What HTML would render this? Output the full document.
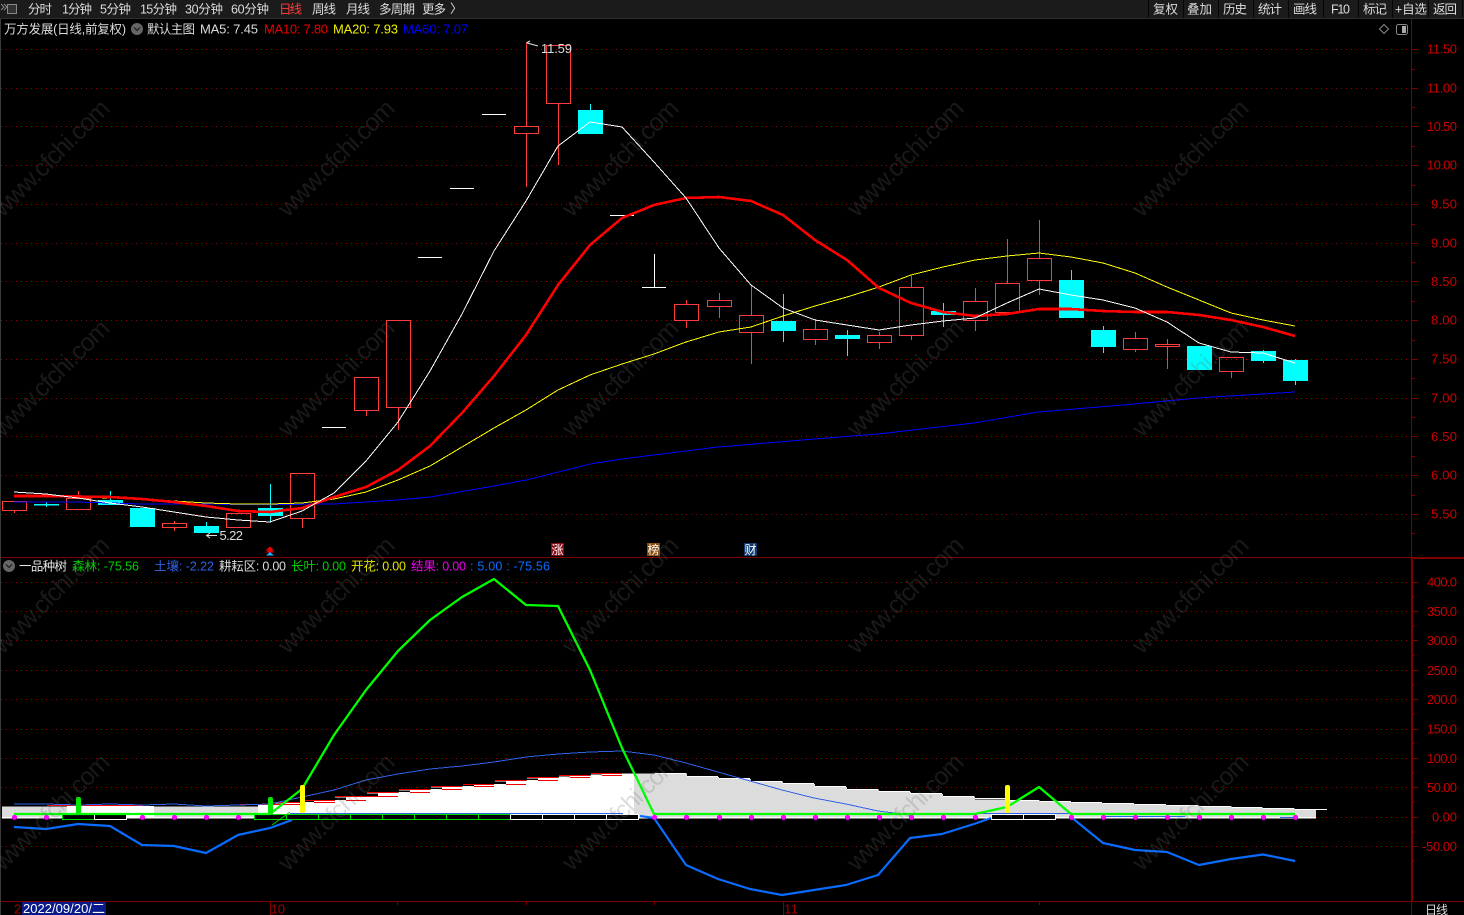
<!DOCTYPE html>
<html><head><meta charset="utf-8"><title>万方发展</title>
<style>
html,body{margin:0;padding:0;background:#000;width:1464px;height:915px;overflow:hidden}
svg{display:block;font-family:"Liberation Sans","Noto Sans CJK SC",sans-serif}
.c{shape-rendering:crispEdges}
.l{fill:none;shape-rendering:crispEdges;stroke-linejoin:round}
.ax text{fill:#cc0000;font-size:13px;text-anchor:end}
.wm text{fill:rgba(110,110,110,.23);font-size:25px}
.t{fill:#dcdcdc;font-size:12.5px}
</style></head><body>
<svg width="1464" height="915" viewBox="0 0 1464 915" xmlns="http://www.w3.org/2000/svg">
<rect width="1464" height="915" fill="#000"/>
<!-- top bar -->
<rect width="1464" height="18" fill="#1b1b1b"/>
<rect y="18" width="1464" height="1" fill="#2e2e2e"/>
<rect x="0" y="19" width="1" height="896" fill="#3a3a3a"/>
<g class="c" fill="#060606"><rect x="1148" width="1" height="18"/><rect x="1183" width="1" height="18"/><rect x="1218" width="1" height="18"/><rect x="1253" width="1" height="18"/><rect x="1288" width="1" height="18"/><rect x="1323" width="1" height="18"/><rect x="1358" width="1" height="18"/><rect x="1392" width="1" height="18"/><rect x="1428" width="1" height="18"/><rect x="1462" width="1" height="18"/></g>
<path d="M1 4l3 3-3 3M4 4l3 3-3 3" fill="none" stroke="#8a8a8a"/>
<rect x="7.5" y="4.5" width="9" height="9" fill="#333" stroke="#888"/>
<g class="t">
<text x="28" y="13.5" textLength="24">分时</text>
<text x="62" y="13.5" textLength="30">1分钟</text>
<text x="100" y="13.5" textLength="31">5分钟</text>
<text x="140" y="13.5" textLength="37">15分钟</text>
<text x="185" y="13.5" textLength="38">30分钟</text>
<text x="231" y="13.5" textLength="38">60分钟</text>
<text x="279" y="13.5" textLength="23" style="fill:#ff3c3c">日线</text>
<text x="312" y="13.5" textLength="24">周线</text>
<text x="346" y="13.5" textLength="24">月线</text>
<text x="379" y="13.5" textLength="36">多周期</text>
<text x="422" y="13.5" textLength="24">更多</text>
<text x="450" y="13">〉</text>
<text x="1153" y="13.5" textLength="25">复权</text>
<text x="1187" y="13.5" textLength="25">叠加</text>
<text x="1223" y="13.5" textLength="24">历史</text>
<text x="1258" y="13.5" textLength="24">统计</text>
<text x="1293" y="13.5" textLength="24">画线</text>
<text x="1331" y="13.5" textLength="19">F10</text>
<text x="1363" y="13.5" textLength="24">标记</text>
<text x="1395" y="13.5" textLength="32">+自选</text>
<text x="1433" y="13.5" textLength="24">返回</text>
<text x="4" y="33.5" textLength="122">万方发展(日线,前复权)</text>
<text x="147" y="33.5" textLength="48">默认主图</text>
<text x="200" y="33.5" textLength="58" style="font-size:13px">MA5: 7.45</text>
<text x="264" y="33.5" textLength="64" style="fill:#e80000;font-size:13px">MA10: 7.80</text>
<text x="333" y="33.5" textLength="65" style="fill:#f0f000;font-size:13px">MA20: 7.93</text>
<text x="403" y="33.5" textLength="65" style="fill:#0000ff;font-size:13px">MA60: 7.07</text>
</g>
<circle cx="137" cy="29" r="6" fill="#666"/><path d="M134 27.5l3 3 3-3" fill="none" stroke="#222" stroke-width="1.3"/>
<path d="M1384 24.5l4.5 4.5-4.5 4.5-4.5-4.5z" fill="none" stroke="#888"/>
<rect x="1396.5" y="24.5" width="11" height="10" rx="2" fill="none" stroke="#888"/><rect x="1402" y="26" width="4" height="7" fill="#aaa"/>

<!-- grid -->
<path d="M1 49.5H1412M1 88.5H1412M1 126.5H1412M1 165.5H1412M1 204.5H1412M1 243.5H1412M1 281.5H1412M1 320.5H1412M1 359.5H1412M1 398.5H1412M1 436.5H1412M1 475.5H1412M1 514.5H1412M1 582.5H1412M1 611.5H1412M1 640.5H1412M1 670.5H1412M1 699.5H1412M1 729.5H1412M1 758.5H1412M1 787.5H1412M1 817.5H1412M1 846.5H1412" stroke="#9a0000" stroke-dasharray="1 4" fill="none" class="c"/>

<!-- axes -->
<g class="c" fill="#800000">
<rect x="1" y="557" width="1463" height="1"/>
<rect x="1" y="901" width="1463" height="1"/>
<rect x="1411" y="19" width="1" height="539"/>
<rect x="1411" y="558" width="2" height="343"/>
<rect x="1412" y="557" width="52" height="2"/>
<rect x="1411" y="901" width="1" height="14"/>
<rect x="270" y="901" width="1" height="14"/>
<rect x="783" y="901" width="1" height="14"/>
<rect x="397" y="902" width="1" height="3"/><rect x="526" y="902" width="1" height="3"/><rect x="654" y="902" width="1" height="3"/><rect x="1039" y="902" width="1" height="3"/>
</g>
<path class="c" stroke="#800000" fill="none" d="M1412 49.5h6M1412 88.5h6M1412 126.5h6M1412 165.5h6M1412 204.5h6M1412 243.5h6M1412 281.5h6M1412 320.5h6M1412 359.5h6M1412 398.5h6M1412 436.5h6M1412 475.5h6M1412 514.5h6M1412 69.5h3M1412 107.5h3M1412 146.5h3M1412 185.5h3M1412 224.5h3M1412 262.5h3M1412 301.5h3M1412 340.5h3M1412 378.5h3M1412 417.5h3M1412 456.5h3M1412 495.5h3M1412 533.5h3M1412 582.5h6M1412 611.5h6M1412 640.5h6M1412 670.5h6M1412 699.5h6M1412 729.5h6M1412 758.5h6M1412 787.5h6M1412 817.5h6M1412 846.5h6M1412 597h3M1412 626h3M1412 655h3M1412 685h3M1412 714h3M1412 743h3M1412 773h3M1412 802h3M1412 832h3M1412 861h3"/>
<g class="ax">
<text x="1457" y="53.5" textLength="30">11.50</text><text x="1457" y="92.5" textLength="30">11.00</text><text x="1457" y="131" textLength="30">10.50</text><text x="1457" y="169.5" textLength="30">10.00</text>
<text x="1457" y="208.5" textLength="26">9.50</text><text x="1457" y="247.5" textLength="26">9.00</text><text x="1457" y="286" textLength="26">8.50</text><text x="1457" y="324.5" textLength="26">8.00</text><text x="1457" y="363.5" textLength="26">7.50</text><text x="1457" y="402.5" textLength="26">7.00</text><text x="1457" y="441" textLength="26">6.50</text><text x="1457" y="479.5" textLength="26">6.00</text><text x="1457" y="518.5" textLength="26">5.50</text>
<text x="1457" y="586.5" textLength="30">400.0</text><text x="1457" y="616" textLength="30">350.0</text><text x="1457" y="645" textLength="30">300.0</text><text x="1457" y="675" textLength="30">250.0</text><text x="1457" y="704" textLength="30">200.0</text><text x="1457" y="733.5" textLength="30">150.0</text><text x="1457" y="763" textLength="30">100.0</text><text x="1457" y="792" textLength="30">50.00</text><text x="1457" y="821.5" textLength="25">0.00</text><text x="1457" y="851" textLength="35">-50.00</text>
</g>

<!-- white limit lines -->
<path class="c" stroke="#fff" fill="none" d="M322 427.5h24M418 257.5h24M450 188.5h24M482 114.5h24M610 215.5h24M642 287.5h24M654.5 254V287"/>
<!-- red candles -->
<path class="c" stroke="#ff3c3c" fill="none" d="M2.5 501.5h24v9h-24zM14.5 510.5V513M66.5 498.5h24v11h-24zM78.5 491V498.5M162.5 523.5h24v4h-24zM174.5 521V523.5M174.5 527.5V531M226.5 513.5h24v14h-24zM290.5 473.5h24v45h-24zM302.5 518.5V528M354.5 377.5h24v33h-24zM366.5 410.5V416M386.5 320.5h24v87h-24zM398.5 407.5V430M514.5 126.5h24v7h-24zM526.5 43V126.5M526.5 133.5V187M546.5 45.5h24v58h-24zM558.5 103.5V165M674.5 304.5h24v16h-24zM686.5 300V304.5M686.5 320.5V328M707.5 300.5h24v6h-24zM719.5 293V300.5M719.5 306.5V318M739.5 315.5h24v17h-24zM751.5 286V315.5M751.5 332.5V364M803.5 329.5h24v10h-24zM815.5 319V329.5M815.5 339.5V345M867.5 335.5h24v7h-24zM879.5 332V335.5M879.5 342.5V349M899.5 287.5h24v48h-24zM911.5 276V287.5M911.5 335.5V340M963.5 301.5h24v19h-24zM975.5 288V301.5M975.5 320.5V331M995.5 283.5h24v29h-24zM1007.5 239V283.5M1027.5 258.5h24v22h-24zM1039.5 220V258.5M1039.5 280.5V295M1123.5 338.5h24v11h-24zM1135.5 332V338.5M1135.5 349.5V352M1155.5 344.5h24v2h-24zM1167.5 339V344.5M1167.5 346.5V369M1219.5 357.5h24v14h-24zM1231.5 371.5V378"/>
<!-- cyan candles -->
<path class="c" stroke="#00ffff" fill="none" d="M46.5 502V507M110.5 491V500M206.5 522V526M270.5 484V522M590.5 104V110M783.5 294V342M847.5 330V356M943.5 303V327M1071.5 270V280M1103.5 326V353M1263.5 350V363M1295.5 359V385"/>
<path class="c" fill="#00ffff" d="M34 504h25v1.5h-25zM98 500h25v5h-25zM130 508h25v19h-25zM194 526h25v7h-25zM258 508h25v8h-25zM578 110h25v24h-25zM771 321h25v10h-25zM835 335h25v4h-25zM931 311h25v4h-25zM1059 280h25v38h-25zM1091 330h25v17h-25zM1187 346h25v24h-25zM1251 351h25v10h-25zM1283 360h25v21h-25z"/>

<!-- MAs -->
<polyline class="l" stroke="#0000ff" stroke-width="1" points="14,502 78,502 110,503 142,504 174,504 270,504.5 334,504 398,500 430,497 494,486 526,480 590,464 622,459 718,447 814,439 878,434 974,423 1038,412 1134,404 1198,398 1295,392"/>
<polyline class="l" stroke="#ffff00" points="14,495 46,497 78,497 110,498 142,499 174,501 206,503 238,504 270,504 302,503 334,499 366,492 398,480 430,466 462,447 494,428 526,410 558,390 590,375 622,364 654,354 686,342 719,332 751,327 783,316 815,306 847,297 879,287 911,275 943,267 975,260 1007,256 1039,253 1071,257 1103,263 1135,273 1167,287 1199,300 1231,313 1263,320 1295,326"/>
<polyline class="l" stroke="#ff0000" stroke-width="2.6" points="14,496 46,496 78,496.5 110,497 142,499 174,502 206,506 238,511 270,512 302,508 334,497 366,487 398,470 430,446 462,413 494,376 526,335 558,285 590,245 622,218 654,205 686,198 719,197 751,201 783,215 815,240 847,260 879,288 911,303 943,312 975,316 1007,314 1039,309 1071,309 1103,311 1135,312 1167,312 1199,315 1231,320 1263,327 1295,336"/>
<polyline class="l" stroke="#ffffff" points="14,492 46,494 78,498 110,503 142,507 174,512 206,517 238,520 270,522 302,511 334,493 366,461 398,422 430,371 462,314 494,251 526,201 558,146 590,122 622,127 654,162 686,198 719,248 751,285 783,308 815,320 847,325 879,330 911,325 943,321 975,318 1007,303 1039,289 1071,295 1103,300 1135,308 1167,322 1199,343 1231,352 1263,353 1295,363"/>

<!-- labels in chart -->
<path d="M530 44l-3-1.5 3-1.5M527 43l11 3" fill="none" stroke="#ddd"/>
<text x="541" y="53" font-size="13" fill="#dcdcdc" textLength="31">11.59</text>
<path d="M210 533l-3.5 2.5 3.5 2.5M207 535.5h10" fill="none" stroke="#ddd"/>
<text x="219.500" y="540" font-size="13" fill="#dcdcdc" textLength="23.500">5.22</text>
<path d="M270 546.500l4.500 4h-9zM270 549.500l4.500 3h-9z" fill="#f00000"/><path d="M270 552l4 3.500h-8z" fill="#20b0ff"/>
<g class="c"><rect x="551" y="543" width="13" height="13" fill="#8b0a14"/><rect x="647" y="543" width="13" height="13" fill="#8a4a0a"/><rect x="744" y="543" width="13" height="13" fill="#0e3a70"/></g>
<g font-size="12" fill="#fff" text-anchor="middle"><text x="557.500" y="554">涨</text><text x="653.500" y="554">榜</text><text x="750.500" y="554">财</text></g>

<!-- indicator title -->
<circle cx="9" cy="566" r="6" fill="#666"/><path d="M6 564.500l3 3 3-3" fill="none" stroke="#222" stroke-width="1.300"/>
<g font-size="12.500">
<text x="19" y="570.500" fill="#e6e6e6" textLength="48">一品种树</text>
<text x="72" y="570.500" fill="#00d000" textLength="67">森林: -75.56</text>
<text x="154" y="570.500" fill="#2f62e8" textLength="60">土壤: -2.22</text>
<text x="219" y="570.500" fill="#dcdcdc" textLength="67">耕耘区: 0.00</text>
<text x="291" y="570.500" fill="#00d000" textLength="55">长叶: 0.00</text>
<text x="351" y="570.500" fill="#e8e800" textLength="55">开花: 0.00</text>
<text x="411" y="570.500" fill="#f000f0" textLength="55">结果: 0.00</text>
<text x="470" y="570.500" fill="#0a6cff" textLength="80">: 5.00 : -75.56</text>
</g>

<!-- histogram -->
<g class="c">
<rect x="2" y="806.500" width="65" height="11.200" fill="#dcdcdc"/>
<rect x="67" y="806" width="87" height="11.700" fill="#fff"/>
<rect x="154" y="806.500" width="104" height="11.200" fill="#dcdcdc"/>
<path fill="#fff" d="M258 804.300H271V802.700H303V800H335V796.300H367V792.300H399V789.300H431V786.300H463V784H495V780.300H527V777.300H559V775.300H591V773.700H623V773.300H634V817.700H258Z"/>
<path fill="#000" d="M271 803.700h11v0.600h-11zM303 801h11v1h-11zM335 797.300h11v2.500h-11zM367 793.300h11v2.500h-11zM399 790.300h11v1.600h-11zM431 787.300h11v1.600h-11zM463 785h11v1h-11zM495 781.300h11v2.500h-11zM527 778.300h11v1.600h-11zM559 776.300h11v0.800h-11zM591 774.700h11v0.400h-11z"/>
<path stroke="#f00000" fill="none" d="M47 805.500H143M240 804.500H302M272 802.500H302M305 800.500H335M314 802.500H335M335 796.500H366M346 800.500H366M367 792.500H398M360 796.500H398M399 789.500H430M410 792.500H430M431 786.500H462M442 789.500H462M463 784.500H494M474 786.500H494M495 780.500H526M506 784.500H526M527 777.500H558M538 780.500H558M559 775.500H590M570 777.500H590M591 773.500H622M602 775.500H622"/>
<path fill="#dcdcdc" d="M634 817.700V773.500H687V777H719V779H751V781.500H783V784H815V787H847V789.500H879V792H911V794H943V796.500H975V799.300H1007V800.700H1040V802H1072V803H1103V804H1135V805H1167V805.700H1199V806.700H1232V807.700H1263V808.700H1295V809.700H1316V817.700Z"/>
<path stroke="#fff" fill="none" d="M655 773.500H686M687 776.500H718M719 778.500H750M751 781.500H782M783 783.500H814M815 786.500H846M847 789.500H878M879 791.500H910M911 793.500H942M943 796.500H974M975 798.500H1006M1007 800.500H1039M1040 801.500H1071M1072 802.500H1102M1103 803.500H1134M1135 804.500H1166M1167 805.500H1198M1199 806.500H1231M1232 807.500H1262M1263 808.500H1294M1295 809.500H1327"/>
<rect x="2" y="817" width="1314" height="1.500" fill="#fff"/>
<!-- boxes -->
<path fill="#000" stroke="#00e000" d="M62.500 814.500h32v5h-32zM254.500 814.500h32v5h-32zM286.500 814.500h32v5h-32zM318.500 814.500h32v5h-32zM350.500 814.500h32v5h-32zM382.500 814.500h32v5h-32zM414.500 814.500h32v5h-32zM446.500 814.500h32v5h-32zM478.500 814.500h32v5h-32z"/>
<path fill="#000" stroke="#fff" d="M94.500 814.500h32v5h-32zM510.500 814.500h32v5h-32zM542.500 814.500h32v5h-32zM574.500 814.500h32v5h-32zM606.500 814.500h32v5h-32zM991.500 814.500h32v5h-32zM1023.500 814.500h32v5h-32z"/>
</g>
<!-- thin blue -->
<polyline class="l" stroke="#2f62e8" points="14,804 46,804 78,805 110,804 142,805 174,804 206,806 238,805 270,804 302,797 334,790 366,780 398,774 430,769 462,766 494,762 526,757 558,754 590,752 622,751 654,755 686,763 718,772 750,781 782,790 814,798 846,804 878,811 910,815"/>
<path class="c" stroke="#2f62e8" fill="none" d="M290 813.500H623M975 813.500H1072M1103 816.500H1135M1135 816.500H1185M1280 817.500H1295"/>
<!-- thick blue -->
<polyline fill="none" stroke="#0a6cff" stroke-width="2.200" stroke-linejoin="round" points="14,827 46,829 78,824 110,826 142,845 174,846 206,853 238,835 270,828 292,820"/>
<polyline fill="none" stroke="#0a6cff" stroke-width="2.200" stroke-linejoin="round" points="640,816 654,818 686,865 718,879 750,889 782,895 814,890 846,885 878,875 910,838 942,834 974,824 991,818"/>
<polyline fill="none" stroke="#0a6cff" stroke-width="2.200" stroke-linejoin="round" points="1071,817 1103,843 1135,850 1167,852 1199,865 1231,859 1263,854.500 1295,861"/>
<!-- green -->
<polyline fill="none" stroke="#00ff00" stroke-width="2.300" stroke-linejoin="round" points="14,814 270,814 302,789 334,735 366,690 398,651 430,620 462,597 494,579 526,605 558,606 590,670 622,748 654,814 975,814 1007,807 1039,787 1071,814 1295,814"/>
<path d="M272 825L290 812" stroke="#00d000" fill="none"/>
<!-- bars -->
<rect x="76" y="797" width="5" height="18" rx="2" fill="#00e800"/>
<rect x="268" y="797" width="5" height="18" rx="2" fill="#00e800"/>
<rect x="300" y="785" width="5" height="28" rx="2" fill="#ffff00"/>
<rect x="1005" y="785" width="5" height="28" rx="2" fill="#ffff00"/>
<!-- dots -->
<g fill="#ff00ff"><circle cx="14.500" cy="817.300" r="2.600"/><circle cx="46.500" cy="817.300" r="2.600"/><circle cx="142.500" cy="817.300" r="2.600"/><circle cx="174.500" cy="817.300" r="2.600"/><circle cx="206.500" cy="817.300" r="2.600"/><circle cx="238.500" cy="817.300" r="2.600"/><circle cx="654.500" cy="817.300" r="2.600"/><circle cx="686.500" cy="817.300" r="2.600"/><circle cx="719.500" cy="817.300" r="2.600"/><circle cx="751.500" cy="817.300" r="2.600"/><circle cx="783.500" cy="817.300" r="2.600"/><circle cx="815.500" cy="817.300" r="2.600"/><circle cx="847.500" cy="817.300" r="2.600"/><circle cx="879.500" cy="817.300" r="2.600"/><circle cx="911.500" cy="817.300" r="2.600"/><circle cx="943.500" cy="817.300" r="2.600"/><circle cx="975.500" cy="817.300" r="2.600"/><circle cx="1071.500" cy="817.300" r="2.600"/><circle cx="1103.500" cy="817.300" r="2.600"/><circle cx="1135.500" cy="817.300" r="2.600"/><circle cx="1167.500" cy="817.300" r="2.600"/><circle cx="1199.500" cy="817.300" r="2.600"/><circle cx="1231.500" cy="817.300" r="2.600"/><circle cx="1263.500" cy="817.300" r="2.600"/><circle cx="1295.500" cy="817.300" r="2.600"/></g>

<!-- bottom axis text -->
<text x="14" y="913.500" font-size="13" fill="#a00000">2</text>
<rect x="22" y="902" width="84" height="13" fill="#0a1a8a"/>
<text x="23" y="913" font-size="13" fill="#fff" textLength="82">2022/09/20/二</text>
<text x="271" y="913.500" font-size="13" fill="#a00000" textLength="14">10</text>
<text x="784" y="913.500" font-size="13" fill="#a00000" textLength="14">11</text>
<text x="1425" y="914" font-size="12" fill="#dcdcdc" textLength="23">日线</text>

<!-- watermarks -->
<g class="wm">
<text transform="translate(3 218) rotate(-45)" textLength="153">www.cfchi.com</text><text transform="translate(288 218) rotate(-45)" textLength="153">www.cfchi.com</text><text transform="translate(572 218) rotate(-45)" textLength="153">www.cfchi.com</text><text transform="translate(857 218) rotate(-45)" textLength="153">www.cfchi.com</text><text transform="translate(1142 218) rotate(-45)" textLength="153">www.cfchi.com</text>
<text transform="translate(3 438) rotate(-45)" textLength="153">www.cfchi.com</text><text transform="translate(288 438) rotate(-45)" textLength="153">www.cfchi.com</text><text transform="translate(572 438) rotate(-45)" textLength="153">www.cfchi.com</text><text transform="translate(857 438) rotate(-45)" textLength="153">www.cfchi.com</text><text transform="translate(1142 438) rotate(-45)" textLength="153">www.cfchi.com</text>
<text transform="translate(3 655) rotate(-45)" textLength="153">www.cfchi.com</text><text transform="translate(288 655) rotate(-45)" textLength="153">www.cfchi.com</text><text transform="translate(572 655) rotate(-45)" textLength="153">www.cfchi.com</text><text transform="translate(857 655) rotate(-45)" textLength="153">www.cfchi.com</text><text transform="translate(1142 655) rotate(-45)" textLength="153">www.cfchi.com</text>
<text transform="translate(3 872) rotate(-45)" textLength="153">www.cfchi.com</text><text transform="translate(288 872) rotate(-45)" textLength="153">www.cfchi.com</text><text transform="translate(572 872) rotate(-45)" textLength="153">www.cfchi.com</text><text transform="translate(857 872) rotate(-45)" textLength="153">www.cfchi.com</text><text transform="translate(1142 872) rotate(-45)" textLength="153">www.cfchi.com</text>
</g>
</svg>
</body></html>
